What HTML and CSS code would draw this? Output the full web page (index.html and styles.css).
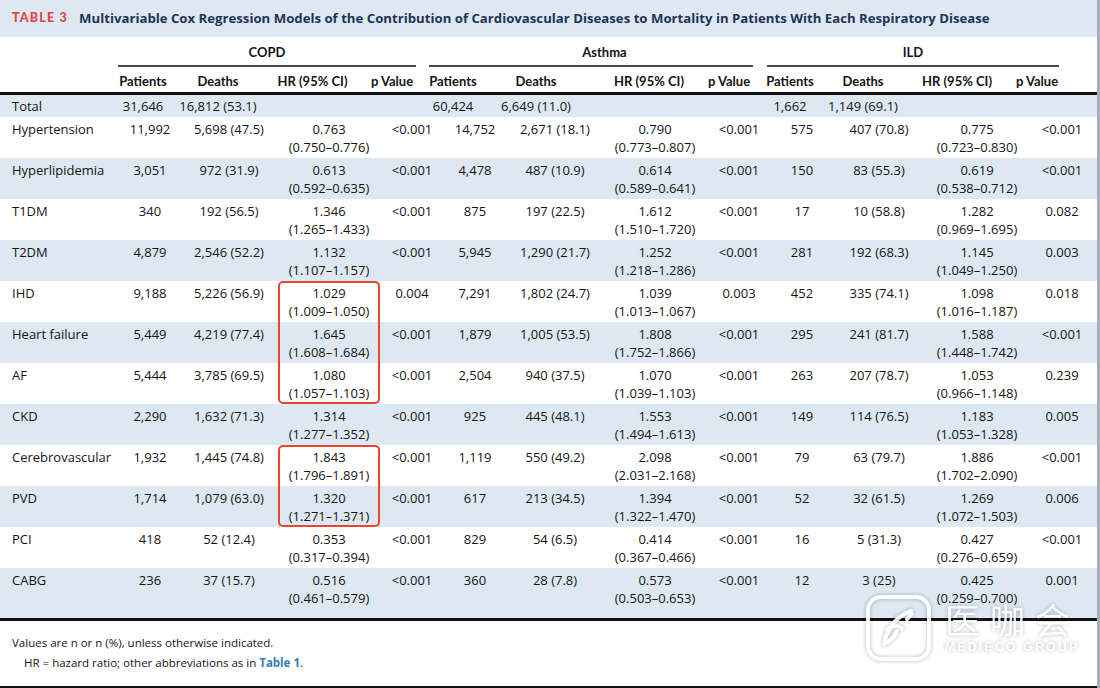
FILE: index.html
```html
<!DOCTYPE html>
<html lang="en">
<head>
<meta charset="utf-8">
<title>Table 3</title>
<link rel="stylesheet" href="styles.css">
</head>
<body>
<div class="page">
  <div class="title"><span class="tag">TABLE 3</span><span class="ttl">Multivariable Cox Regression Models of the Contribution of Cardiovascular Diseases to Mortality in Patients With Each Respiratory Disease</span></div>

  <div class="hgrid groups">
    <div class="lab"></div>
    <div class="grp g-copd">COPD</div>
    <div class="grp g-asthma">Asthma</div>
    <div class="grp g-ild">ILD</div>
  </div>

  <div class="hgrid subs">
    <div class="lab"></div>
    <div>Patients</div><div>Deaths</div><div>HR (95% CI)</div><div>p Value</div>
    <div>Patients</div><div>Deaths</div><div>HR (95% CI)</div><div>p Value</div>
    <div>Patients</div><div>Deaths</div><div>HR (95% CI)</div><div>p Value</div>
  </div>

  <div class="hgrid total">
    <div class="lab">Total</div>
    <div>31,646</div><div>16,812 (53.1)</div><div></div><div></div>
    <div>60,424</div><div>6,649 (11.0)</div><div></div><div></div>
    <div>1,662</div><div>1,149 (69.1)</div><div></div><div></div>
  </div>

  <div class="dgrid row">
    <div class="lab">Hypertension</div>
    <div>11,992</div><div>5,698 (47.5)</div><div>0.763<br>(0.750–0.776)</div><div>&lt;0.001</div>
    <div>14,752</div><div>2,671 (18.1)</div><div>0.790<br>(0.773–0.807)</div><div>&lt;0.001</div>
    <div>575</div><div>407 (70.8)</div><div>0.775<br>(0.723–0.830)</div><div>&lt;0.001</div>
  </div>
  <div class="dgrid row alt">
    <div class="lab">Hyperlipidemia</div>
    <div>3,051</div><div>972 (31.9)</div><div>0.613<br>(0.592–0.635)</div><div>&lt;0.001</div>
    <div>4,478</div><div>487 (10.9)</div><div>0.614<br>(0.589–0.641)</div><div>&lt;0.001</div>
    <div>150</div><div>83 (55.3)</div><div>0.619<br>(0.538–0.712)</div><div>&lt;0.001</div>
  </div>
  <div class="dgrid row">
    <div class="lab">T1DM</div>
    <div>340</div><div>192 (56.5)</div><div>1.346<br>(1.265–1.433)</div><div>&lt;0.001</div>
    <div>875</div><div>197 (22.5)</div><div>1.612<br>(1.510–1.720)</div><div>&lt;0.001</div>
    <div>17</div><div>10 (58.8)</div><div>1.282<br>(0.969–1.695)</div><div>0.082</div>
  </div>
  <div class="dgrid row alt">
    <div class="lab">T2DM</div>
    <div>4,879</div><div>2,546 (52.2)</div><div>1.132<br>(1.107–1.157)</div><div>&lt;0.001</div>
    <div>5,945</div><div>1,290 (21.7)</div><div>1.252<br>(1.218–1.286)</div><div>&lt;0.001</div>
    <div>281</div><div>192 (68.3)</div><div>1.145<br>(1.049–1.250)</div><div>0.003</div>
  </div>
  <div class="dgrid row">
    <div class="lab">IHD</div>
    <div>9,188</div><div>5,226 (56.9)</div><div class="hl hl-top">1.029<br>(1.009–1.050)</div><div>0.004</div>
    <div>7,291</div><div>1,802 (24.7)</div><div>1.039<br>(1.013–1.067)</div><div>0.003</div>
    <div>452</div><div>335 (74.1)</div><div>1.098<br>(1.016–1.187)</div><div>0.018</div>
  </div>
  <div class="dgrid row alt">
    <div class="lab">Heart failure</div>
    <div>5,449</div><div>4,219 (77.4)</div><div class="hl hl-mid">1.645<br>(1.608–1.684)</div><div>&lt;0.001</div>
    <div>1,879</div><div>1,005 (53.5)</div><div>1.808<br>(1.752–1.866)</div><div>&lt;0.001</div>
    <div>295</div><div>241 (81.7)</div><div>1.588<br>(1.448–1.742)</div><div>&lt;0.001</div>
  </div>
  <div class="dgrid row">
    <div class="lab">AF</div>
    <div>5,444</div><div>3,785 (69.5)</div><div class="hl hl-bot">1.080<br>(1.057–1.103)</div><div>&lt;0.001</div>
    <div>2,504</div><div>940 (37.5)</div><div>1.070<br>(1.039–1.103)</div><div>&lt;0.001</div>
    <div>263</div><div>207 (78.7)</div><div>1.053<br>(0.966–1.148)</div><div>0.239</div>
  </div>
  <div class="dgrid row alt">
    <div class="lab">CKD</div>
    <div>2,290</div><div>1,632 (71.3)</div><div>1.314<br>(1.277–1.352)</div><div>&lt;0.001</div>
    <div>925</div><div>445 (48.1)</div><div>1.553<br>(1.494–1.613)</div><div>&lt;0.001</div>
    <div>149</div><div>114 (76.5)</div><div>1.183<br>(1.053–1.328)</div><div>0.005</div>
  </div>
  <div class="dgrid row">
    <div class="lab">Cerebrovascular</div>
    <div>1,932</div><div>1,445 (74.8)</div><div class="hl hl-top">1.843<br>(1.796–1.891)</div><div>&lt;0.001</div>
    <div>1,119</div><div>550 (49.2)</div><div>2.098<br>(2.031–2.168)</div><div>&lt;0.001</div>
    <div>79</div><div>63 (79.7)</div><div>1.886<br>(1.702–2.090)</div><div>&lt;0.001</div>
  </div>
  <div class="dgrid row alt">
    <div class="lab">PVD</div>
    <div>1,714</div><div>1,079 (63.0)</div><div class="hl hl-bot">1.320<br>(1.271–1.371)</div><div>&lt;0.001</div>
    <div>617</div><div>213 (34.5)</div><div>1.394<br>(1.322–1.470)</div><div>&lt;0.001</div>
    <div>52</div><div>32 (61.5)</div><div>1.269<br>(1.072–1.503)</div><div>0.006</div>
  </div>
  <div class="dgrid row">
    <div class="lab">PCI</div>
    <div>418</div><div>52 (12.4)</div><div>0.353<br>(0.317–0.394)</div><div>&lt;0.001</div>
    <div>829</div><div>54 (6.5)</div><div>0.414<br>(0.367–0.466)</div><div>&lt;0.001</div>
    <div>16</div><div>5 (31.3)</div><div>0.427<br>(0.276–0.659)</div><div>&lt;0.001</div>
  </div>
  <div class="dgrid row alt last">
    <div class="lab">CABG</div>
    <div>236</div><div>37 (15.7)</div><div>0.516<br>(0.461–0.579)</div><div>&lt;0.001</div>
    <div>360</div><div>28 (7.8)</div><div>0.573<br>(0.503–0.653)</div><div>&lt;0.001</div>
    <div>12</div><div>3 (25)</div><div>0.425<br>(0.259–0.700)</div><div>0.001</div>
  </div>

  <div class="foot">
    <p>Values are n or n (%), unless otherwise indicated.</p>
    <p class="ind">HR = hazard ratio; other abbreviations as in <span class="ref">Table 1</span>.</p>
  </div>

  <div class="wm">
    <svg class="wm-logo" width="67" height="68" viewBox="0 0 67 68">
      <rect x="3" y="3" width="61" height="62" rx="13" fill="none" stroke="#fff" stroke-width="4"/>
      <path d="M46 17 C32 22 22 34 19 50 M22 36 C27 31 34 31 37 35 M19 50 C25 47 30 42 32 37 M42 25 L47 20" fill="none" stroke="#fff" stroke-width="4" stroke-linecap="round"/>
    </svg>
    <div class="wm-text">
      <div class="wm-cn">医咖会</div>
      <div class="wm-en">MEDIECO GROUP</div>
    </div>
  </div>
</div>
</body>
</html>
```

FILE: styles.css
```css
html, body {
  margin: 0;
  padding: 0;
  background: #ffffff;
}

body {
  font-family: "Open Sans", "Noto Sans", "Liberation Sans", sans-serif;
  font-size: 13px;
  color: #141414;
}

.page {
  position: relative;
  width: 1097px;
  height: 688px;
  border-right: 3px solid #a4afba;
  overflow: hidden;
}

/* Title bar */
.title {
  height: 37px;
  background: #dde8f3;
  display: flex;
  align-items: center;
  padding-left: 12px;
  padding-bottom: 2px;
  box-sizing: border-box;
  white-space: nowrap;
}

.tag {
  font-family: Lato, "Open Sans", sans-serif;
  font-weight: 900;
  font-size: 12.5px;
  letter-spacing: 1.2px;
  color: #e0473f;
  margin-right: 11px;
}

.ttl {
  font-family: "Open Sans", sans-serif;
  font-weight: 700;
  font-size: 13.2px;
  color: #1d3557;
}

/* Grids */
.hgrid {
  display: grid;
  grid-template-columns: 118px 50px 100px 89px 70px 52px 114px 112px 48px 74px 72px 116px 44px 1fr;
  text-align: center;
  line-height: 18px;
  white-space: nowrap;
}

.dgrid {
  display: grid;
  grid-template-columns: 120px 60px 98px 102px 64px 62px 98px 102px 66px 60px 94px 102px 68px 1fr;
  text-align: center;
  line-height: 18px;
  white-space: nowrap;
}

.hgrid > .lab,
.dgrid > .lab {
  text-align: left;
  padding-left: 12px;
}

.groups,
.subs {
  font-family: Lato, "Open Sans", sans-serif;
  font-weight: 700;
  font-size: 13px;
}

.groups {
  padding-top: 6px;
}

.grp {
  grid-column: span 4;
  padding-bottom: 4px;
  border-bottom: 2px solid #4a4a4a;
}

.g-copd {
  margin-right: 11px;
}

.g-asthma {
  margin-left: 2px;
  padding-left: 27px;
}

.g-ild {
  margin-left: 14px;
}

.subs {
  padding-top: 5px;
  padding-bottom: 2px;
  border-bottom: 3px solid #111;
}

.total {
  background: #dde8f3;
  padding: 2px 0;
}

.row > div {
  padding-top: 3px;
  padding-bottom: 2px;
  box-sizing: border-box;
}

.row.alt {
  background: #dde8f3;
}

.row.last > div {
  padding-bottom: 11px;
}

.row.last {
  border-bottom: 3px solid #111;
}

/* Highlight box */
.hl {
  border-left: 2px solid #e8472f;
  border-right: 2px solid #e8472f;
}

.hl-top {
  border-top: 2px solid #e8472f;
  border-radius: 5px 5px 0 0;
}

.hl-bot {
  border-bottom: 2px solid #e8472f;
  border-radius: 0 0 5px 5px;
}

.row > .hl-top {
  padding-top: 1px;
}

.row > .hl-bot {
  padding-bottom: 0;
}

/* Footnote */
.foot {
  padding: 12px 0 13px 12px;
  border-bottom: 2px solid #111;
  font-size: 11.5px;
  line-height: 20px;
}

.foot p {
  margin: 0;
}

.foot .ind {
  padding-left: 12px;
}

.ref {
  color: #2f7fb5;
  font-weight: 700;
}

/* Watermark */
.wm {
  position: absolute;
  left: 865px;
  top: 594px;
  display: flex;
  align-items: flex-start;
  gap: 13px;
  opacity: 0.92;
  filter: drop-shadow(0 0 2px rgba(0, 0, 0, 0.3));
}

.wm-text {
  display: flex;
  flex-direction: column;
  align-items: flex-start;
  padding-top: 8px;
}

.wm-cn {
  font-family: "Noto Sans CJK SC", sans-serif;
  font-size: 35px;
  line-height: 34px;
  letter-spacing: 10px;
  color: #ffffff;
}

.wm-en {
  font-family: "Liberation Sans", sans-serif;
  font-weight: 700;
  font-size: 12px;
  line-height: 12px;
  letter-spacing: 2.4px;
  color: #ffffff;
  margin-top: 5px;
}
```
